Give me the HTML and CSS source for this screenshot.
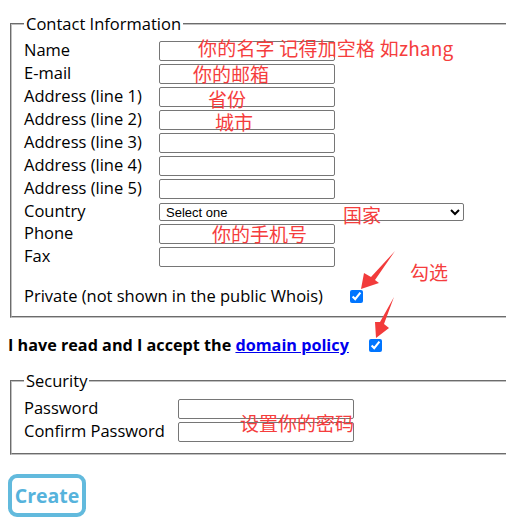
FILE: index.html
```html
<!DOCTYPE html>
<html lang="en">
<head>
<meta charset="utf-8">
<title>Register</title>
<link rel="stylesheet" href="styles.css">
</head>
<body>
<div class="page">
  <form class="form" onsubmit="return false">
    <fieldset class="box contact">
      <legend>Contact Information</legend>
      <div class="rows">
        <label class="lbl">Name</label><input class="field" type="text">
        <label class="lbl">E-mail</label><input class="field" type="text">
        <label class="lbl">Address (line 1)</label><input class="field" type="text">
        <label class="lbl">Address (line 2)</label><input class="field" type="text">
        <label class="lbl">Address (line 3)</label><input class="field" type="text">
        <label class="lbl">Address (line 4)</label><input class="field" type="text">
        <label class="lbl">Address (line 5)</label><input class="field" type="text">
        <label class="lbl">Country</label><select class="country"><option>Select one</option></select>
        <label class="lbl">Phone</label><input class="field" type="text">
        <label class="lbl">Fax</label><input class="field" type="text">
      </div>
      <div class="private">
        <span class="private-text">Private (not shown in the public Whois)</span><input class="check" type="checkbox" checked>
      </div>
    </fieldset>

    <div class="accept">
      <span class="accept-text">I have read and I accept the <a href="#">domain policy</a></span><input class="check" type="checkbox" checked>
    </div>

    <fieldset class="box security">
      <legend>Security</legend>
      <div class="rows rows-sec">
        <label class="lbl">Password</label><input class="field" type="password">
        <label class="lbl">Confirm Password</label><input class="field" type="password">
      </div>
    </fieldset>

    <button class="create" type="submit">Create</button>
  </form>

  <span class="note n-name">你的名字 记得加空格 如zhang</span>
  <span class="note n-mail">你的邮箱</span>
  <span class="note n-prov">省份</span>
  <span class="note n-city">城市</span>
  <span class="note n-country">国家</span>
  <span class="note n-phone">你的手机号</span>
  <span class="note n-check">勾选</span>
  <span class="note n-pass">设置你的密码</span>

  <svg class="arrows" width="506" height="517" viewBox="0 0 506 517" aria-hidden="true">
    <polygon fill="#f23b3b" points="361,289 364,273 371,277 395,251 375,280 379,283"/>
    <polygon fill="#f23b3b" points="376,338 375,322 380,322 394,297 384,324 389,328"/>
  </svg>
</div>
</body>
</html>
```

FILE: styles.css
```css
html, body {
  margin: 0;
  padding: 0;
  background: #fff;
}

.page {
  position: relative;
  width: 506px;
  height: 517px;
  overflow: hidden;
  box-sizing: border-box;
  padding: 8px;
  font-family: "Open Sans", "Noto Sans", sans-serif;
  font-size: 16.5px;
  color: #000;
}

.form {
  margin: 0;
}

.box {
  margin: 5px -8px 0 2px;
  border: 2px groove #c0c0c0;
  border-right: none;
  padding: 6px 12px 10px 12px;
  min-width: 0;
}

.box legend {
  padding: 0 2px;
  margin-left: 0;
  line-height: 22px;
}

.rows {
  display: grid;
  grid-template-columns: 135px 176px;
  row-gap: 3px;
  align-items: start;
}

.rows-sec {
  grid-template-columns: 154px 176px;
}

.lbl {
  line-height: 18px;
  white-space: nowrap;
}

.field {
  box-sizing: border-box;
  width: 176px;
  height: 20px;
  margin: 0;
  padding: 1px 2px;
  border: 1px solid #767676;
  border-radius: 2px;
  font-size: 13px;
}

.country {
  box-sizing: border-box;
  width: 305px;
  height: 18px;
  margin: 1px 0 0;
  padding: 0 2px;
  border: 1px solid #767676;
  border-radius: 2px;
  font-family: "Liberation Sans", Arial, sans-serif;
  font-size: 13px;
  background: #fff;
}

.private {
  display: flex;
  align-items: center;
  margin-top: 19px;
  line-height: 20px;
}

.private-text {
  width: 326px;
  flex: none;
}

.check {
  width: 13px;
  height: 13px;
  margin: 0;
  accent-color: #0075ff;
}

.accept {
  display: flex;
  align-items: center;
  margin-top: 17px;
  line-height: 20px;
  font-weight: bold;
  font-size: 16.2px;
}

.accept-text {
  width: 361px;
  flex: none;
}

.accept a {
  color: #0000ee;
  text-decoration: underline;
}

.security {
  margin-top: 15px;
  padding-top: 7px;
  padding-bottom: 11px;
}

.create {
  display: block;
  box-sizing: border-box;
  width: 78px;
  height: 43px;
  margin-top: 19px;
  padding: 0;
  border: 4px solid #62badd;
  border-radius: 9px;
  background: #fff;
  color: #56b3dc;
  font-family: "Open Sans", "Noto Sans", sans-serif;
  font-size: 19.5px;
  font-weight: bold;
}

.note {
  position: absolute;
  font-family: "Noto Sans CJK SC", "Noto Sans", sans-serif;
  font-size: 19px;
  line-height: 19px;
  color: #f53d3d;
  white-space: pre;
}

.n-name { left: 198px; top: 38px; letter-spacing: 0.2px; }
.n-mail { left: 193px; top: 64px; }
.n-prov { left: 208px; top: 89px; }
.n-city { left: 215px; top: 112px; }
.n-country { left: 343px; top: 205px; }
.n-phone { left: 212px; top: 224px; }
.n-check { left: 410px; top: 262px; }
.n-pass { left: 240px; top: 413px; }

.arrows {
  position: absolute;
  left: 0;
  top: 0;
  pointer-events: none;
}
```
